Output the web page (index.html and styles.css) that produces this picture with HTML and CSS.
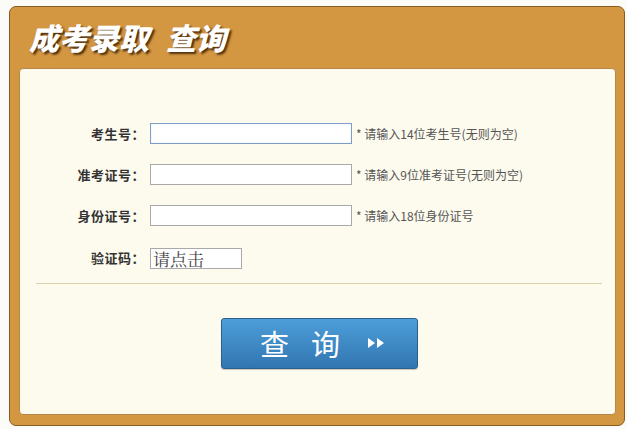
FILE: index.html
```html
<html>
    <head>
        <title>成考录取查询</title>
        <meta charset="utf-8">
        <link rel="stylesheet" href="styles.css">
    </head>
    <body>
        <div class="frame">
            <div class="head">
                <h1 class="title">成考录取<span class="gap"></span>查询</h1>
            </div>
            <div class="panel">
                <form class="form" name="form1">
                    <label class="lbl" for="ksh">考生号：</label>
                    <input class="txt focus" id="ksh" type="text">
                    <span class="tip">* 请输入14位考生号(无则为空)</span>

                    <label class="lbl" for="zkz">准考证号：</label>
                    <input class="txt" id="zkz" type="text">
                    <span class="tip">* 请输入9位准考证号(无则为空)</span>

                    <label class="lbl" for="sfz">身份证号：</label>
                    <input class="txt" id="sfz" type="text">
                    <span class="tip">* 请输入18位身份证号</span>

                    <label class="lbl lbl-code">验证码：</label>
                    <div class="code">请点击</div>
                    <span></span>
                </form>
                <hr class="sep">
                <div class="btn-row">
                    <button class="button" type="button">
                        <span>查</span><span>询</span>
                        <svg class="arr" width="20" height="14" viewBox="0 0 20 14">
                            <path d="M2 2 L9 7 L2 12 Z M11 2 L18 7 L11 12 Z" fill="#fff"/>
                        </svg>
                    </button>
                </div>
            </div>
        </div>
    </body>
</html>
```

FILE: styles.css
```css
body {
    margin: 0;
    background: #fbfbf7;
    font-family: "Noto Sans CJK SC", "Noto Sans", sans-serif;
}
.frame {
    margin: 6px 0 0 9px;
    width: 616px;
    height: 420px;
    background: #d39641;
    border: 1px solid #8a5a22;
    border-radius: 7px;
    box-sizing: border-box;
    padding: 0 8px 0 9px;
}
.head {
    height: 61px;
    box-sizing: border-box;
    padding: 11px 0 0 10px;
}
.title {
    margin: 0;
    color: #fff;
    font-size: 30px;
    line-height: 38px;
    font-weight: 900;
    font-style: italic;
    text-shadow: 2px 2px 2px rgba(50, 25, 0, 0.8);
}
.gap {
    display: inline-block;
    width: 17px;
}
.panel {
    background: #fdfaee;
    border: 1px solid #b5874a;
    border-radius: 4px;
    height: 347px;
    box-sizing: border-box;
    padding-top: 44px;
}
.form {
    display: grid;
    grid-template-columns: 120px 203px 1fr;
    grid-auto-rows: 41px;
    column-gap: 10px;
    align-items: center;
    margin: 0;
}
.lbl {
    text-align: right;
    font-size: 13px;
    font-weight: bold;
    color: #333;
    letter-spacing: 0.5px;
    margin-right: -5px;
}
.txt {
    width: 202px;
    height: 21px;
    box-sizing: border-box;
    border: 1px solid #a9a9a9;
    background: #fff;
    margin: 0;
    padding: 0;
}
.txt.focus {
    border: 1px solid #7f9dc9;
    box-shadow: inset 0 0 1px #9cb6dc;
}
.tip {
    margin-left: -7px;
    font-size: 12px;
    color: #555;
}
.lbl-code {
    position: relative;
    top: 1px;
}
.code {
    width: 92px;
    height: 21px;
    box-sizing: border-box;
    border: 1px solid #a9a9a9;
    background: #fff;
    font-family: "Noto Serif CJK SC", "Liberation Serif", serif;
    font-size: 17px;
    line-height: 19px;
    color: #444;
    padding-left: 2px;
    margin-top: 3px;
}
.sep {
    margin: 6px 13px 0 16px;
    border: none;
    border-top: 1px solid #d9cfa8;
    height: 0;
}
.btn-row {
    display: flex;
    justify-content: center;
    padding-top: 34px;
    padding-left: 3px;
}
.button {
    width: 197px;
    height: 51px;
    border: 1px solid #2a5f8e;
    border-radius: 3px;
    background: linear-gradient(#4d9ed9, #3276b1);
    color: #fff;
    font-family: "Noto Sans CJK SC", sans-serif;
    font-size: 29px;
    display: flex;
    align-items: center;
    justify-content: center;
    gap: 22px;
    padding: 0 0 2px 8px;
    box-shadow: 0 1px 1px rgba(0, 0, 0, 0.2);
}
.arr {
    margin-left: 4px;
}
```
